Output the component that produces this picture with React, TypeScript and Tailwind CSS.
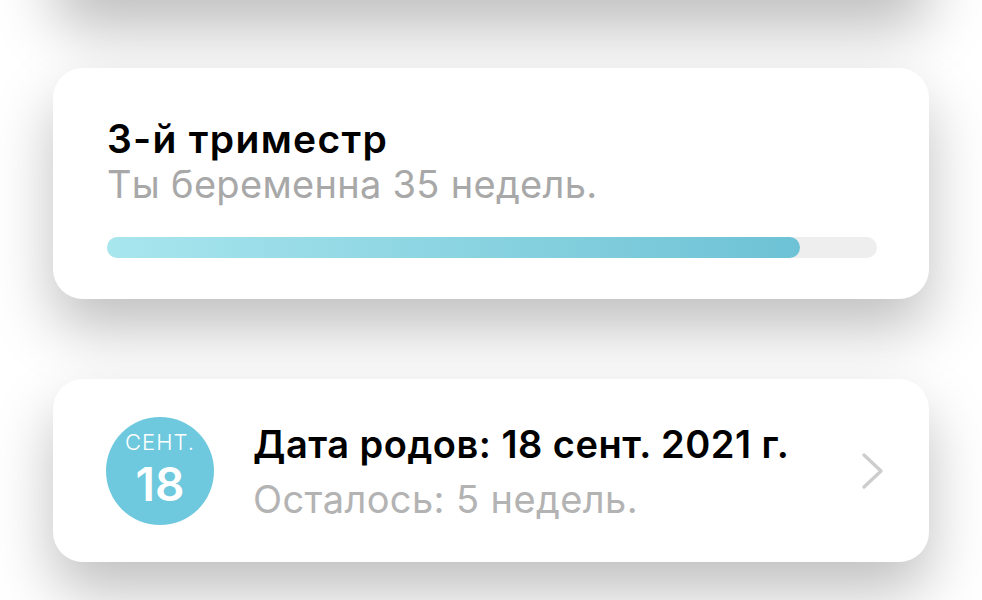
type ProgressCardProps = {
  title: string;
  subtitle: string;
  percent: number;
};

function ProgressCard({ title, subtitle, percent }: ProgressCardProps) {
  return (
    <div className="mt-[68px] rounded-[30px] bg-white pt-[50px] pr-[52px] pb-[41px] pl-[54px] shadow-[0_30px_60px_rgba(0,0,0,0.25)]">
      <div className="text-[39px] leading-[42px] font-semibold tracking-[1.3px] text-black">{title}</div>
      <div className="mt-[5px] text-[38px] leading-[38px] tracking-[0.3px] text-[#a8a8a8]">{subtitle}</div>
      <div className="mt-[34px] h-[21px] w-full rounded-full bg-[#eeeeee]">
        <div
          className="h-full rounded-full bg-gradient-to-r from-[#a8e6ee] to-[#6dc2d5]"
          style={{ width: `${percent}%` }}
        />
      </div>
    </div>
  );
}

type DueDateCardProps = {
  month: string;
  day: number;
  title: string;
  subtitle: string;
};

function DueDateCard({ month, day, title, subtitle }: DueDateCardProps) {
  return (
    <div className="mt-[80px] flex h-[183px] items-center rounded-[30px] bg-white pr-[44px] pl-[53px] shadow-[0_30px_60px_rgba(0,0,0,0.25)]">
      <div className="flex h-[108px] w-[108px] shrink-0 flex-col items-center rounded-full bg-[#6ec9de] pt-[13px] text-white">
        <span className="text-[22px] leading-[24px] font-light tracking-[1px]">{month}</span>
        <span className="mt-[10px] text-[46px] leading-[40px] font-semibold">{day}</span>
      </div>
      <div className="ml-[39px] flex-1">
        <div className="text-[38px] leading-[42px] font-semibold tracking-[0.5px] text-black">{title}</div>
        <div className="mt-[14px] text-[38px] leading-[40px] tracking-[0.4px] text-[#b3b3b3]">{subtitle}</div>
      </div>
      <svg width="24" height="38" viewBox="0 0 24 38" fill="none" className="shrink-0">
        <path
          d="M3 3 L20 19 L3 35"
          stroke="#cdcdcd"
          strokeWidth="3.4"
          strokeLinecap="round"
          strokeLinejoin="round"
        />
      </svg>
    </div>
  );
}

export default function App() {
  return (
    <div className="h-[600px] w-[982px] overflow-hidden bg-white font-['Inter','Noto_Sans',sans-serif]">
      <div className="flex flex-col px-[53px] pb-[80px]">
        {/* previous card, scrolled out above the top edge */}
        <div className="-mt-[100px] h-[100px] rounded-[30px] bg-white shadow-[0_30px_60px_rgba(0,0,0,0.25)]" />
        <ProgressCard title="3-й триместр" subtitle="Ты беременна 35 недель." percent={90} />
        <DueDateCard
          month="СЕНТ."
          day={18}
          title="Дата родов: 18 сент. 2021 г."
          subtitle="Осталось: 5 недель."
        />
      </div>
    </div>
  );
}
